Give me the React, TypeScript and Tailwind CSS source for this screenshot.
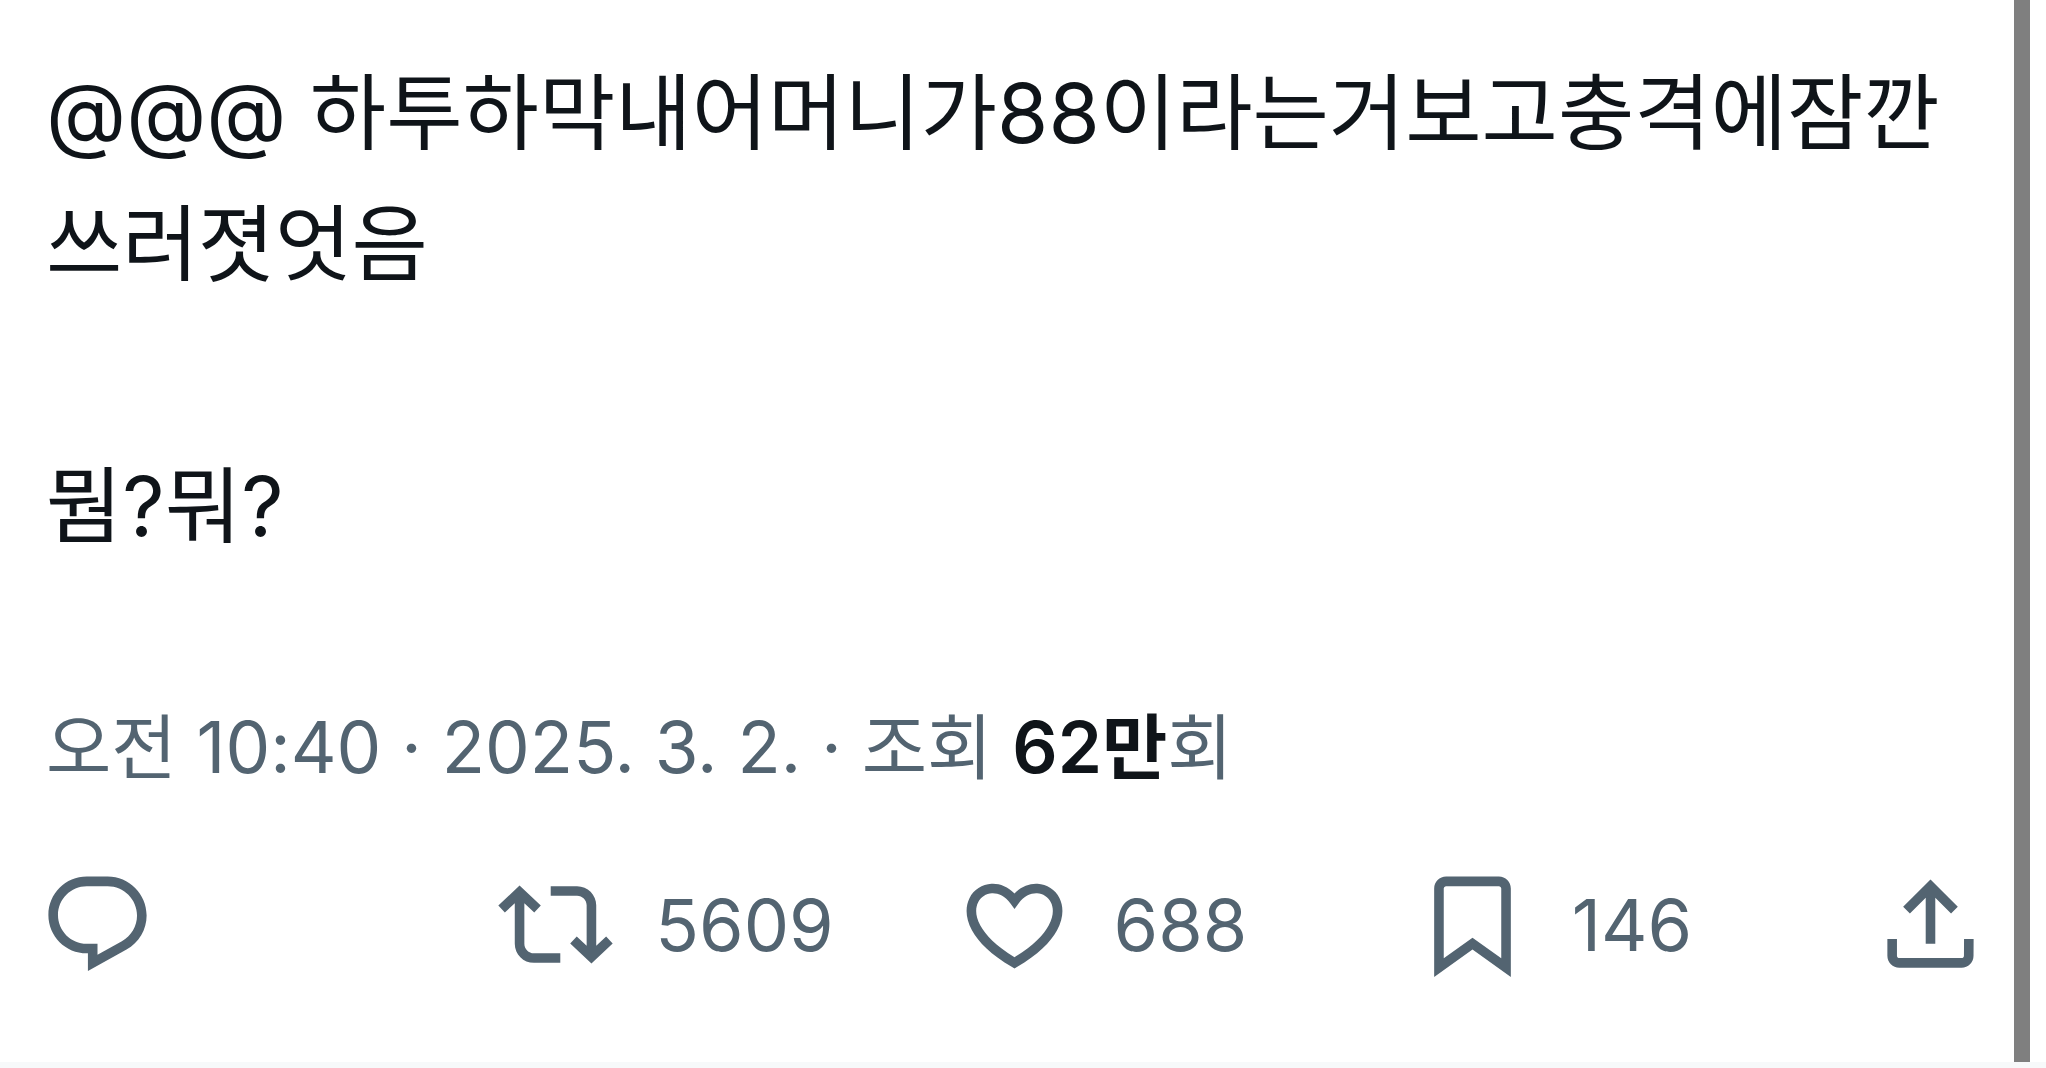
import React from "react";

const paths = {
  reply:
    "M1.751 10c0-4.42 3.584-8 8.005-8h4.366c4.49 0 8.129 3.64 8.129 8.13 0 2.96-1.607 5.68-4.196 7.11l-8.054 4.46v-3.69h-.067c-4.49.1-8.183-3.51-8.183-8.01zm8.005-6c-3.317 0-6.005 2.69-6.005 6 0 3.37 2.77 6.08 6.138 6.01l.351-.01h1.761v2.3l5.087-2.81c1.951-1.08 3.163-3.13 3.163-5.36 0-3.39-2.744-6.13-6.129-6.13H9.756z",
  repost:
    "M4.5 3.88l4.432 4.14-1.364 1.46L5.5 7.55V16c0 1.1.896 2 2 2H13v2H7.5c-2.209 0-4-1.79-4-4V7.55L1.432 9.48.068 8.02 4.5 3.88zM16.5 6H11V4h5.5c2.209 0 4 1.79 4 4v8.45l2.068-1.93 1.364 1.46-4.432 4.14-4.432-4.14 1.364-1.46 2.068 1.93V8c0-1.1-.896-2-2-2z",
  like:
    "M16.697 5.5c-1.222-.06-2.679.51-3.89 2.16l-.805 1.09-.806-1.09C9.984 6.01 8.526 5.44 7.304 5.5c-1.243.07-2.349.78-2.91 1.91-.552 1.12-.633 2.78.479 4.82 1.074 1.97 3.257 4.27 7.129 6.61 3.87-2.34 6.052-4.64 7.126-6.61 1.111-2.04 1.03-3.7.477-4.82-.561-1.13-1.666-1.84-2.908-1.91zm4.187 7.69c-1.351 2.48-4.001 5.12-8.379 7.67l-.503.3-.504-.3c-4.379-2.55-7.029-5.19-8.382-7.67-1.36-2.5-1.41-4.86-.514-6.67.887-1.79 2.647-2.91 4.601-3.01 1.651-.09 3.368.56 4.798 2.01 1.429-1.45 3.146-2.1 4.796-2.01 1.954.1 3.714 1.22 4.601 3.01.896 1.81.846 4.17-.514 6.67z",
  bookmark:
    "M4 4.5C4 3.12 5.119 2 6.5 2h11C18.881 2 20 3.12 20 4.5v18.44l-8-5.71-8 5.71V4.5zM6.5 4c-.276 0-.5.22-.5.5v14.56l6-4.29 6 4.29V4.5c0-.28-.224-.5-.5-.5h-11z",
  share:
    "M12 2.59l5.7 5.7-1.41 1.42L13 6.41V16h-2V6.41l-3.3 3.3-1.41-1.42L12 2.59zM21 15l-.02 3.51c0 1.38-1.12 2.49-2.5 2.49H5.5C4.11 21 3 19.88 3 18.5V15h2v3.5c0 .28.22.5.5.5h12.98c.28 0 .5-.22.5-.5L19 15h2z",
};

type ActionProps = { icon: keyof typeof paths; label: string; count?: string };

function Action({ icon, label, count }: ActionProps) {
  return (
    <button
      type="button"
      aria-label={count ? `${label} ${count}` : label}
      className="flex cursor-pointer items-center gap-[42px] justify-self-start"
    >
      <svg viewBox="0 0 24 24" aria-hidden="true" className="size-[115px] shrink-0 fill-current">
        <path d={paths[icon]} />
      </svg>
      {count && <span>{count}</span>}
    </button>
  );
}

export default function App() {
  return (
    <div className="flex min-h-screen flex-col border-b-[6px] border-[#f7f9fa] bg-white font-[Inter,'Noto_Sans_CJK_KR',sans-serif]">
      <article
        lang="ko"
        className="mr-4 flex grow flex-col border-r-[16px] border-[#7f7f7f] pt-12 pr-[26px] pl-10 text-[#536471]"
      >
        <p className="px-1.5 text-[83px] leading-[131px] whitespace-pre-line text-[#0f1419]">
          @@@ 하투하막내어머니가88이라는거보고충격에잠깐{"\n"}쓰러졋엇음{"\n\n"}뭠?뭐?
        </p>
        <div className="mt-32 px-1.5 text-[71px] leading-[94px]">
          <a href="#status">
            <time dateTime="2025-03-02T10:40">오전 10:40 · 2025. 3. 2.</time>
          </a>{" "}
          · 조회 <span className="font-semibold text-[#0f1419]">62만</span>회
        </div>
        <div className="mt-[73px] grid grid-cols-[repeat(4,1fr)_auto] items-center text-[72px] leading-[94px]">
          <Action icon="reply" label="답글" />
          <Action icon="repost" label="재게시" count="5609" />
          <Action icon="like" label="마음에 들어요" count="688" />
          <Action icon="bookmark" label="북마크" count="146" />
          <Action icon="share" label="공유하기" />
        </div>
      </article>
    </div>
  );
}
